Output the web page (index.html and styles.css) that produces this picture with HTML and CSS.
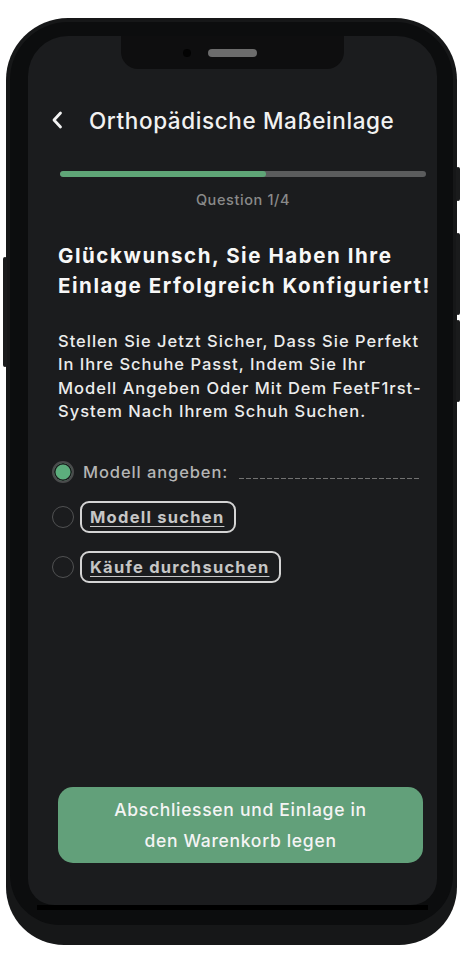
FILE: index.html
```html
<!DOCTYPE html>
<html lang="de">
<head>
<meta charset="utf-8">
<title>Orthopädische Maßeinlage</title>
<link rel="stylesheet" href="styles.css">
</head>
<body>
<div class="phone">
  <span class="side-btn side-left"></span>
  <span class="side-btn side-r1"></span>
  <span class="side-btn side-r2"></span>
  <span class="side-btn side-r3"></span>
  <div class="bezel">
    <div class="screen">
      <div class="notch"><span class="cam"></span><span class="speaker"></span></div>
      <header class="topbar">
        <svg class="back" width="12" height="18" viewBox="0 0 12 18" aria-hidden="true"><path d="M9.5 2 L3 9 L9.5 16" fill="none" stroke="#f2f2f2" stroke-width="2.8" stroke-linecap="round" stroke-linejoin="round"/></svg>
        <h1 class="title">Orthopädische Maßeinlage</h1>
      </header>
      <main class="content">
        <div class="progress"><div class="progress-fill" style="width:56.3%"></div></div>
        <p class="question">Question 1/4</p>
        <h2 class="heading">Glückwunsch, Sie Haben Ihre Einlage Erfolgreich Konfiguriert!</h2>
        <p class="lead">Stellen Sie Jetzt Sicher, Dass Sie Perfekt In Ihre Schuhe Passt, Indem Sie Ihr Modell Angeben Oder Mit Dem FeetF1rst-System Nach Ihrem Schuh Suchen.</p>
        <div class="options">
          <label class="option option-first">
            <span class="radio radio-on"></span>
            <span class="opt-text">Modell angeben:</span>
            <span class="dash"></span>
          </label>
          <label class="option">
            <span class="radio"></span>
            <span class="chip">Modell suchen</span>
          </label>
          <label class="option">
            <span class="radio"></span>
            <span class="chip">Käufe durchsuchen</span>
          </label>
        </div>
      </main>
      <button class="cta">Abschliessen und Einlage in<br>den Warenkorb legen</button>
    </div>
    <div class="chin"></div>
  </div>
</div>
</body>
</html>
```
FILE: styles.css
```css
* { box-sizing: border-box; }
html, body { margin: 0; padding: 0; background: #ffffff; }
body { font-family: Inter, "Noto Sans", sans-serif; }

.phone {
  position: relative;
  margin: 18px 0 0 6px;
  width: 451px;
  height: 927px;
  border-radius: 62px 62px 58px 58px;
  background: #161718;
  padding: 4px 4px 20px 4px;
}
.side-btn {
  position: absolute;
  width: 4px;
  background: #1a1b1c;
  border-radius: 2px;
}
.side-left { left: -3px; top: 239px; height: 110px; }
.side-r1 { right: -3px; top: 149px; height: 34px; }
.side-r2 { right: -3px; top: 215px; height: 82px; }
.side-r3 { right: -3px; top: 302px; height: 82px; }

.bezel {
  height: 100%;
  border-radius: 58px 58px 50px 50px;
  background: #0c0d0e;
  padding: 14px 16px 0 18px;
  display: flex;
  flex-direction: column;
}
.screen {
  height: 869px;
  flex-shrink: 0;
  background: #1b1c1e;
  border-radius: 40px 40px 26px 26px;
  display: flex;
  flex-direction: column;
  overflow: hidden;
}
.chin {
  height: 5px;
  background: #000;
  margin: 0 9px;
}

.notch {
  align-self: center;
  width: 223px;
  height: 33px;
  background: #0e0e0f;
  border-radius: 0 0 17px 17px;
  display: flex;
  align-items: center;
  justify-content: center;
  gap: 17px;
  padding-right: 25px;
  flex-shrink: 0;
}
.cam { width: 8px; height: 8px; border-radius: 50%; background: #030303; }
.speaker { width: 49px; height: 8px; border-radius: 4px; background: #6c6c6c; }

.topbar {
  display: flex;
  align-items: center;
  height: 30px;
  margin-top: 36px;
  padding-left: 23px;
}
.back { flex-shrink: 0; }
.title {
  margin: 0 0 0 26px;
  font-size: 22.5px;
  font-weight: 500;
  color: #f1f1f1;
  letter-spacing: 0.6px;
  white-space: nowrap;
}

.content {
  padding: 0 11px 0 30px;
  display: flex;
  flex-direction: column;
}
.progress {
  margin: 36px 0 0 2px;
  height: 6px;
  border-radius: 3px;
  background: #5b5c5d;
  overflow: hidden;
}
.progress-fill { height: 100%; background: #5fa577; border-radius: 3px; }
.question {
  margin: 14px 0 0 2px;
  text-align: center;
  font-size: 14.5px;
  line-height: 18px;
  letter-spacing: 0.6px;
  color: #8a8a8a;
  font-weight: 500;
}
.heading {
  margin: 32px -12px 0 0;
  font-size: 20.5px;
  line-height: 30px;
  font-weight: 700;
  letter-spacing: 1.55px;
  color: #f7f7f7;
}
.lead {
  margin: 29px 0 0;
  font-size: 16.5px;
  line-height: 23.3px;
  font-weight: 500;
  letter-spacing: 1px;
  color: #ececec;
}
.options {
  margin-top: 38px;
  display: flex;
  flex-direction: column;
  gap: 18px;
}
.option {
  display: flex;
  align-items: center;
  gap: 6px;
  color: #b5b5b5;
  font-size: 16.5px;
}
.option-first { gap: 9px; }
.radio {
  width: 22px;
  height: 22px;
  border-radius: 50%;
  border: 1.5px solid #505152;
  flex-shrink: 0;
  margin-left: -6px;
}
.radio-on {
  border: 2px solid #4a4b4c;
  background: #5cae7d;
  box-shadow: inset 0 0 0 1.5px #1b1c1e;
}
.opt-text { font-weight: 500; letter-spacing: 0.9px; }
.dash {
  flex: 1;
  align-self: flex-end;
  height: 1.5px;
  margin: 0 6px 4px 2px;
  background-image: linear-gradient(to right, #727272 0 5px, transparent 5px 7px);
  background-size: 7px 1.5px;
}
.chip {
  height: 32px;
  display: flex;
  align-items: center;
  padding: 0 10px 0 8px;
  border: 2px solid #d4d4d4;
  border-radius: 9px;
  font-weight: 700;
  letter-spacing: 1.25px;
  color: #c6c6c6;
  text-decoration: underline;
  text-underline-offset: 3px;
}

.cta {
  margin: auto 14px 42px 30px;
  height: 76px;
  flex-shrink: 0;
  border: 0;
  border-radius: 15px;
  background: #62a07a;
  color: #f4f4f4;
  font-family: Inter, "Noto Sans", sans-serif;
  font-size: 17.5px;
  font-weight: 500;
  letter-spacing: 0.7px;
  line-height: 31px;
}
```
